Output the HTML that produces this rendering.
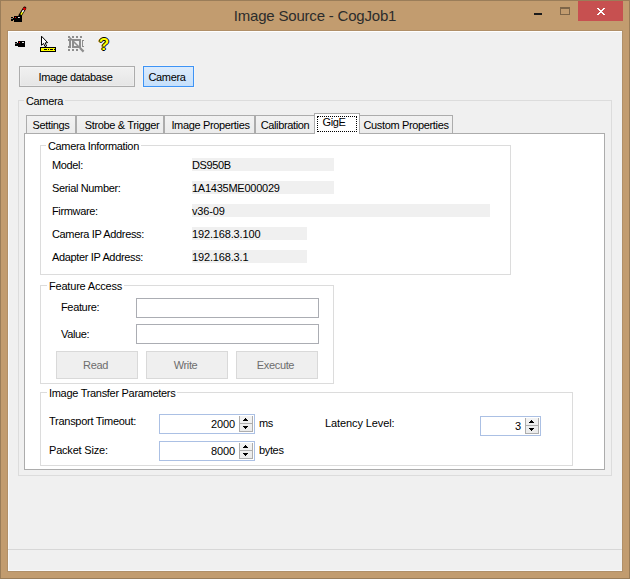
<!DOCTYPE html>
<html><head><meta charset="utf-8"><title>Image Source - CogJob1</title>
<style>
*{box-sizing:border-box;margin:0;padding:0}
html,body{width:630px;height:579px;overflow:hidden}
body{background:#c29c6f;font-family:"Liberation Sans",sans-serif;font-size:11px;letter-spacing:-0.35px;color:#000;position:relative}
.abs,.abs *{position:absolute}
#frame{left:0;top:0;width:630px;height:579px;border:1px solid #9a7d59}
#title{left:0;top:5px;width:630px;text-align:center;font-size:15px;line-height:22px;color:#2c2c2c;letter-spacing:-0.2px}
#close{left:578px;top:1px;width:45px;height:20px;background:#c75050}
#client{left:7px;top:30px;width:616px;height:542px;border:1px solid #b08f68;background:#f0f0f0;box-shadow:inset 1px 0 #f9f9f9,inset 0 -1px #f9f9f9}
.t{white-space:nowrap;line-height:13px;height:13px}
.btn{border:1px solid #acacac;background:linear-gradient(#f1f1f1,#e5e5e5);text-align:center;line-height:21px;height:21px;top:66px;box-shadow:inset 0 0 0 1px rgba(255,255,255,.25)}
.gb{border:1px solid #dcdcdc}
.gbl{padding:0 2px;line-height:13px;height:13px;white-space:nowrap;background:#fff}
.tab{top:115px;height:19px;border:1px solid #acacac;border-bottom:none;background:linear-gradient(#f2f2f2,#ebebeb);text-align:center;line-height:19px;white-space:nowrap}
.val{background:#f0f0f0;height:13px;line-height:13px;padding:1px 0 0 0;white-space:nowrap;letter-spacing:-0.15px}
.tb{border:1px solid #abadb3;background:#fff}
.dbtn{border:1px solid #d9d9d9;background:#efefef;color:#6d6d6d;text-align:center;line-height:25px;top:351px;width:82px;height:28px;padding:1px 3px 0 0}
.num{border:1px solid #abc0e4;background:#fff;height:20px}
.num .v{right:19px;top:3px;line-height:13px;letter-spacing:-0.1px}
.sp{right:1px;top:1px;width:14px;height:16px;background:linear-gradient(#f3f3f3,#ebebeb);border:1px solid #adadad;border-top:none}
.sp b{left:0;top:7px;width:12px;height:1px;background:#adadad}
.sp i{left:5px;width:1px;height:1px;background:#000}
.sp i.u{top:2px;box-shadow:-1px 1px #000,0 1px #000,1px 1px #000,-2px 2px #000,-1px 2px #000,0 2px #000,1px 2px #000,2px 2px #000}
.sp i.d{top:12px;box-shadow:-1px -1px #000,0 -1px #000,1px -1px #000,-2px -2px #000,-1px -2px #000,0 -2px #000,1px -2px #000,2px -2px #000}
svg{left:0;top:0;overflow:visible}
</style></head><body>
<div class="abs" id="frame"></div>
<div class="abs" id="title">Image Source - CogJob1</div>
<div class="abs" id="close"></div>
<div class="abs" id="client"></div>
<div class="abs" id="ui" style="left:0;top:0;width:630px;height:579px">
 <div style="left:8px;top:31px;width:614px;height:1px;background:#fff"></div>
 <svg width="630" height="60" viewBox="0 0 630 60" shape-rendering="crispEdges">
  <!-- caption buttons -->
  <rect x="534" y="13" width="8" height="2" fill="#1b1b1b"/>
  <rect x="560" y="7" width="10" height="2" fill="#7d6548"/>
  <rect x="560.5" y="8.5" width="9" height="6" fill="none" stroke="#7d6548" stroke-width="1"/>
  <g fill="#fff"><rect x="597" y="8" width="2" height="1"/><rect x="603" y="8" width="2" height="1"/><rect x="598" y="9" width="2" height="1"/><rect x="602" y="9" width="2" height="1"/><rect x="599" y="10" width="2" height="1"/><rect x="601" y="10" width="2" height="1"/><rect x="600" y="11" width="2" height="1"/><rect x="599" y="12" width="2" height="1"/><rect x="601" y="12" width="2" height="1"/><rect x="598" y="13" width="2" height="1"/><rect x="602" y="13" width="2" height="1"/><rect x="597" y="14" width="2" height="1"/><rect x="603" y="14" width="2" height="1"/></g>
  <!-- app icon -->
  <rect x="11" y="17" width="2" height="4" fill="#000"/><rect x="13" y="18" width="1" height="2" fill="#000"/>
  <rect x="11" y="18" width="2" height="1" fill="#777"/>
  <rect x="14" y="16" width="8" height="6" fill="#000"/>
  <rect x="15" y="17" width="1" height="1" fill="#f00"/><rect x="18" y="17" width="2" height="1" fill="#ddd"/>
  <g shape-rendering="auto" transform="translate(0.7,0)"><path d="M19.3 15.6 L24 8.2" stroke="#000" stroke-width="3.2" stroke-linecap="round"/>
  <path d="M20.2 14.6 L21.9 11.8" stroke="#ff0" stroke-width="1.5"/><path d="M21.7 12.2 L22.9 10.2" stroke="#fff" stroke-width="1.5"/>
  <circle cx="23.7" cy="8.8" r="1.4" fill="#e00"/></g>
  <!-- toolbar camera -->
  <rect x="15" y="42" width="2" height="4" fill="#000"/><rect x="17" y="43" width="1" height="3" fill="#000"/>
  <rect x="15" y="43" width="2" height="1" fill="#666"/>
  <rect x="18" y="41" width="7" height="6" fill="#000"/>
  <rect x="19" y="42" width="1" height="1" fill="#f00"/><rect x="22" y="42" width="2" height="1" fill="#ddd"/>
  <!-- cursor + ruler -->
  <rect x="40.5" y="47.5" width="15" height="4" fill="#ff0" stroke="#000" stroke-width="1"/>
  <rect x="44" y="49" width="3" height="1" fill="#000"/><rect x="48" y="49" width="1" height="1" fill="#000"/><rect x="50" y="49" width="3" height="1" fill="#000"/><rect x="54" y="49" width="1" height="1" fill="#000"/>
  <g shape-rendering="auto"><path d="M41.5 36.2 L41.5 45.3 L43.6 43.4 L45 46.6 L46.6 46 L45.2 42.9 L47.6 42.6 Z" fill="#fff" stroke="#000" stroke-width="1"/></g>
  <!-- disabled region icon -->
  <g fill="#8e8e8e">
   <rect x="68" y="36" width="2" height="2"/><rect x="72" y="36" width="2" height="2"/><rect x="76" y="36" width="2" height="2"/><rect x="80" y="36" width="2" height="2"/>
   <rect x="68" y="49" width="2" height="2"/><rect x="72" y="49" width="2" height="2"/><rect x="76" y="49" width="2" height="2"/>
   <rect x="69" y="39" width="2" height="9"/><rect x="68" y="39" width="1" height="2"/><rect x="68" y="46" width="1" height="2"/>
   <rect x="72" y="39" width="9" height="2"/><rect x="72" y="46" width="9" height="2"/><rect x="72" y="39" width="2" height="9"/><rect x="79" y="39" width="2" height="9"/>
   <rect x="82" y="40" width="2" height="1"/><rect x="82" y="46" width="2" height="1"/><rect x="82" y="40" width="1" height="7"/>
  </g>
  <g shape-rendering="auto"><path d="M69 37 L80 48" stroke="#8e8e8e" stroke-width="1.6"/><path d="M80 48 L83.6 51.6" stroke="#8e8e8e" stroke-width="2.2"/></g>
 </svg>
 <div style="left:97px;top:36px;width:14px;height:18px;text-align:center;font:bold 17px/18px 'Liberation Sans',sans-serif;letter-spacing:0;color:#ff0;text-shadow:1px 0 #000,-1px 0 #000,0 1px #000,0 -1px #000">?</div>

 <div class="btn" style="left:19px;width:116px;padding-right:3px">Image database</div>
 <div class="btn" style="left:143px;width:51px;border-color:#3d93f5;background:linear-gradient(#dcebfc,#c6e0fb);box-shadow:0 0 0 1px rgba(255,255,255,.3);padding-right:3px">Camera</div>

 <div class="gb" style="left:18px;top:100px;width:594px;height:376px"></div>
 <div class="gbl" style="left:24px;top:95px;background:#f0f0f0">Camera</div>

 <div class="tab" style="left:26px;width:50px">Settings</div>
 <div class="tab" style="left:76px;width:88px;padding-left:4px">Strobe &amp; Trigger</div>
 <div class="tab" style="left:164px;width:91px;padding-left:2px">Image Properties</div>
 <div class="tab" style="left:255px;width:60px">Calibration</div>
 <div class="tab" style="left:359px;width:94px">Custom Properties</div>
 <div style="left:24px;top:133px;width:581px;height:337px;border:1px solid #acacac;background:#fff"></div>
 <div class="tab" style="left:314px;top:113px;width:46px;height:21px;background:#fff;line-height:17px;padding-right:6px">GigE<div style="left:2px;top:2px;width:40px;height:16px;border:1px dotted #000"></div></div>

 <div class="gb" style="left:40px;top:145px;width:471px;height:130px"></div>
 <div class="gbl" style="left:46px;top:140px">Camera Information</div>
 <div class="t" style="left:52px;top:159px">Model:</div>
 <div class="t" style="left:52px;top:182px">Serial Number:</div>
 <div class="t" style="left:52px;top:205px">Firmware:</div>
 <div class="t" style="left:52px;top:228px">Camera IP Address:</div>
 <div class="t" style="left:52px;top:251px">Adapter IP Address:</div>
 <div class="val" style="left:192px;top:158px;width:142px;letter-spacing:-0.38px">DS950B</div>
 <div class="val" style="left:192px;top:181px;width:142px;letter-spacing:-0.25px">1A1435ME000029</div>
 <div class="val" style="left:192px;top:204px;width:298px">v36-09</div>
 <div class="val" style="left:192px;top:227px;width:115px">192.168.3.100</div>
 <div class="val" style="left:192px;top:250px;width:115px">192.168.3.1</div>

 <div class="gb" style="left:40px;top:285px;width:294px;height:99px"></div>
 <div class="gbl" style="left:47px;top:280px;letter-spacing:-0.2px">Feature Access</div>
 <div class="t" style="left:61px;top:301px">Feature:</div>
 <div class="t" style="left:61px;top:328px">Value:</div>
 <div class="tb" style="left:136px;top:298px;width:183px;height:20px"></div>
 <div class="tb" style="left:136px;top:324px;width:183px;height:20px"></div>
 <div class="dbtn" style="left:56px">Read</div>
 <div class="dbtn" style="left:146px">Write</div>
 <div class="dbtn" style="left:236px">Execute</div>

 <div class="gb" style="left:40px;top:392px;width:533px;height:74px"></div>
 <div class="gbl" style="left:47px;top:387px;letter-spacing:-0.3px">Image Transfer Parameters</div>
 <div class="t" style="left:49px;top:415px;letter-spacing:-0.27px">Transport Timeout:</div>
 <div class="t" style="left:49px;top:444px;letter-spacing:-0.2px">Packet Size:</div>
 <div class="num" style="left:159px;top:414px;width:96px"><span class="v">2000</span><div class="sp"><b></b><i class="u"></i><i class="d"></i></div></div>
 <div class="num" style="left:159px;top:441px;width:96px"><span class="v">8000</span><div class="sp"><b></b><i class="u"></i><i class="d"></i></div></div>
 <div class="t" style="left:259px;top:417px">ms</div>
 <div class="t" style="left:259px;top:444px">bytes</div>
 <div class="t" style="left:325px;top:417px;letter-spacing:-0.1px">Latency Level:</div>
 <div class="num" style="left:480px;top:416px;width:61px"><span class="v">3</span><div class="sp"><b></b><i class="u"></i><i class="d"></i></div></div>

 <div style="left:8px;top:549px;width:614px;height:1px;background:#d7d7d7"></div>
</div>
</body></html>
